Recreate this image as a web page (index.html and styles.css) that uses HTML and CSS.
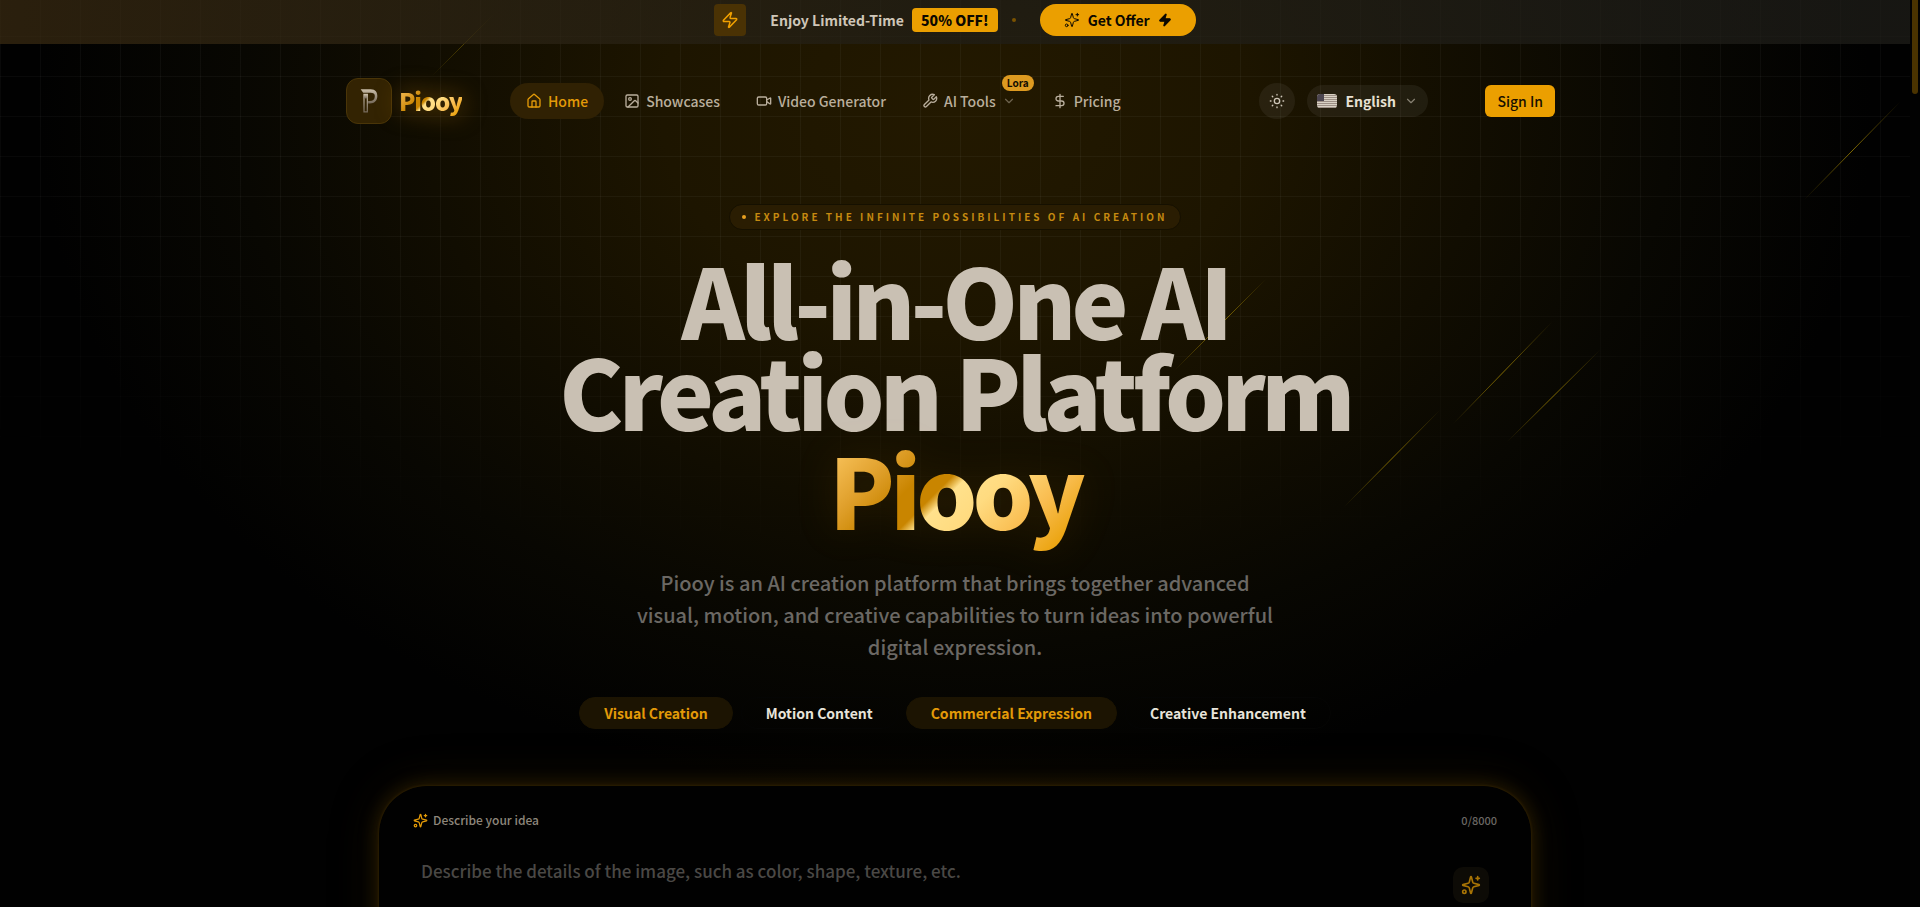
FILE: index.html
```html
<!DOCTYPE html>
<html lang="en">
<head>
<meta charset="utf-8">
<meta name="viewport" content="width=device-width, initial-scale=1">
<title>Piooy - All-in-One AI Creation Platform</title>
<link rel="stylesheet" href="styles.css">
</head>
<body>
<svg class="defs" aria-hidden="true">
  <defs>
    <symbol id="sparkles" viewBox="0 0 24 24"><path d="M9.94 15.5A2 2 0 0 0 8.5 14.06l-6.14-1.58a.5.5 0 0 1 0-.96L8.5 9.94A2 2 0 0 0 9.94 8.5l1.58-6.14a.5.5 0 0 1 .96 0l1.58 6.14a2 2 0 0 0 1.44 1.44l6.14 1.58a.5.5 0 0 1 0 .96l-6.14 1.58a2 2 0 0 0-1.44 1.44l-1.58 6.14a.5.5 0 0 1-.96 0z"/><path d="M20 2v4M22 4h-4"/><circle cx="4" cy="20" r="2"/></symbol>
    <symbol id="bolt" viewBox="0 0 24 24"><path d="M4 14a1 1 0 0 1-.78-1.63l9.9-10.2a.5.5 0 0 1 .86.46l-1.92 6.02A1 1 0 0 0 13 10h7a1 1 0 0 1 .78 1.63l-9.9 10.2a.5.5 0 0 1-.86-.46l1.92-6.02A1 1 0 0 0 11 14z"/></symbol>
    <symbol id="chevron" viewBox="0 0 24 24"><path d="m6 9 6 6 6-6"/></symbol>
    <linearGradient id="streak" x1="0" y1="1" x2="1" y2="0">
      <stop offset="0" stop-color="#a88a00" stop-opacity="0"/>
      <stop offset=".5" stop-color="#a88a00" stop-opacity=".75"/>
      <stop offset="1" stop-color="#a88a00" stop-opacity="0"/>
    </linearGradient>
    <linearGradient id="steel" x1="0" y1="0" x2="0" y2="1">
      <stop offset="0" stop-color="#c9bda8"/>
      <stop offset="1" stop-color="#75695a"/>
    </linearGradient>
  </defs>
</svg>

<div class="page">
  <div class="backdrop" aria-hidden="true">
    <div class="grid"></div>
    <svg class="streaks">
      <path d="M1804 200 1900 102" stroke="url(#streak)"/>
      <path d="M1453 424 1552 322" stroke="url(#streak)"/>
      <path d="M1507 442 1600 350" stroke="url(#streak)"/>
      <path d="M1344 507 1440 410" stroke="url(#streak)"/>
      <path d="M1174 371 1266 279" stroke="url(#streak)"/>
      <path d="M432 76 494 14" stroke="url(#streak)" opacity=".5"/>
    </svg>
  </div>

  <div class="promo">
    <span class="promo-icon"><svg class="icon"><use href="#bolt"/></svg></span>
    <p class="promo-text">Enjoy Limited-Time <strong>50% OFF!</strong></p>
    <span class="promo-dot"></span>
    <button class="offer" type="button">
      <svg class="icon thin"><use href="#sparkles"/></svg>Get Offer<svg class="icon solid"><use href="#bolt"/></svg>
    </button>
  </div>

  <header class="header">
    <a class="brand" href="#">
      <span class="brand-mark">
        <svg viewBox="0 0 24 30"><path d="M2 1h12c6 0 8 4 8 8 0 5-3 9-9 9h-2v-3h2c4 0 6-2 6-6 0-3-2-4-5-4H5z" fill="url(#steel)"/><path d="M6 7h4v21H6z" fill="none" stroke="url(#steel)" stroke-width="1.5"/><path d="M6 7h4v5H6z" fill="url(#steel)"/></svg>
      </span>
      <span class="brand-name gold">Piooy</span>
    </a>
    <nav class="nav" aria-label="Main">
      <a class="nav-item active" href="#"><svg class="icon" viewBox="0 0 24 24"><path d="M15 21v-8a1 1 0 0 0-1-1h-4a1 1 0 0 0-1 1v8"/><path d="M3 10a2 2 0 0 1 .71-1.53l7-6a2 2 0 0 1 2.58 0l7 6A2 2 0 0 1 21 10v9a2 2 0 0 1-2 2H5a2 2 0 0 1-2-2z"/></svg>Home</a>
      <a class="nav-item" href="#"><svg class="icon" viewBox="0 0 24 24"><rect x="3" y="3" width="18" height="18" rx="2"/><circle cx="9" cy="9" r="2"/><path d="m21 15-3.09-3.09a2 2 0 0 0-2.82 0L6 21"/></svg>Showcases</a>
      <a class="nav-item" href="#"><svg class="icon" viewBox="0 0 24 24"><path d="m16 13 5.22 3.48a.5.5 0 0 0 .78-.41V7.87a.5.5 0 0 0-.75-.43L16 10.5"/><rect x="2" y="6" width="14" height="12" rx="2"/></svg>Video Generator</a>
      <button class="nav-item" type="button"><svg class="icon" viewBox="0 0 24 24"><path d="M14.7 6.3a1 1 0 0 0 0 1.4l1.6 1.6a1 1 0 0 0 1.4 0l3.77-3.77a6 6 0 0 1-7.94 7.94l-6.91 6.91a2.12 2.12 0 0 1-3-3l6.91-6.91a6 6 0 0 1 7.94-7.94z"/></svg>AI Tools<svg class="icon faint compact"><use href="#chevron"/></svg><span class="tag">Lora</span></button>
      <a class="nav-item" href="#"><svg class="icon" viewBox="0 0 24 24"><path d="M12 2v20M17 5H9.5a3.5 3.5 0 0 0 0 7h5a3.5 3.5 0 0 1 0 7H6"/></svg>Pricing</a>
    </nav>
    <div class="actions">
      <button class="theme" type="button" aria-label="Toggle theme"><svg class="icon" viewBox="0 0 24 24"><circle cx="12" cy="12" r="4"/><path d="M12 2v1M12 21v1M4.93 4.93l.7.7M18.36 18.36l.7.7M2 12h1M21 12h1M5.64 18.36l-.7.7M19.07 4.93l-.7.7"/></svg></button>
      <label class="language">
        <svg class="flag" viewBox="0 0 20 14"><rect width="20" height="14" fill="#d9d1c4"/><path d="M0 1.5h20M0 3.5h20M0 5.5h20M0 7.5h20M0 9.5h20M0 11.5h20M0 13.5h20" stroke="#9d8f85"/><rect width="7" height="7" fill="#4d4650"/></svg>
        <select aria-label="Language"><option>English</option></select>
        <svg class="icon faint compact"><use href="#chevron"/></svg>
      </label>
      <button class="signin" type="button">Sign In</button>
    </div>
  </header>

  <main class="hero">
    <p class="eyebrow"><span class="eyebrow-dot"></span>Explore the infinite possibilities of AI creation</p>
    <h1 class="title">All-in-One AI<br>Creation Platform<br><span class="title-brand gold">Piooy</span></h1>
    <p class="lead">Piooy is an AI creation platform that brings together advanced visual, motion, and creative capabilities to turn ideas into powerful digital expression.</p>
    <div class="chips">
      <button class="chip on" type="button">Visual Creation</button>
      <button class="chip" type="button">Motion Content</button>
      <button class="chip on" type="button">Commercial Expression</button>
      <button class="chip" type="button">Creative Enhancement</button>
    </div>
    <form class="composer">
      <div class="composer-head">
        <label class="composer-label" for="idea"><svg class="icon"><use href="#sparkles"/></svg>Describe your idea</label>
        <span class="count">0/8000</span>
      </div>
      <div class="composer-body">
        <textarea id="idea" placeholder="Describe the details of the image, such as color, shape, texture, etc."></textarea>
        <button class="enhance" type="button" aria-label="Enhance prompt"><svg class="icon"><use href="#sparkles"/></svg></button>
      </div>
    </form>
  </main>
</div>
<div class="scrollbar" aria-hidden="true"><span class="thumb"></span></div>
</body>
</html>
```

FILE: styles.css
```css
* { box-sizing: border-box; margin: 0; }

body {
  display: flex;
  height: 100vh;
  overflow: hidden;
  background: #010101;
  color: #cfc6b8;
  font-family: "Noto Sans CJK SC", "Noto Sans", sans-serif;
  font-size: 14px;
  line-height: 24px;
}

button, select, textarea { font: inherit; color: inherit; border: 0; background: none; padding: 0; }
a { color: inherit; text-decoration: none; }

.defs { position: absolute; width: 0; height: 0; }

.icon {
  width: 16px;
  height: 16px;
  flex: none;
  fill: none;
  stroke: currentColor;
  stroke-width: 2;
  stroke-linecap: round;
  stroke-linejoin: round;
}
.icon.faint { opacity: .5; }
.icon.compact { width: 14px; height: 14px; }
.icon.solid { width: 14px; height: 14px; fill: currentColor; }
.icon.thin { stroke-width: 1.5; }

.gold {
  background: linear-gradient(135deg, #f8c25a 8%, #e0a02c 24%, #c98500 36%, #c98500 44%, #ffe18c 48%, #ffdb80 58%, #f9bd50 74%, #e89e00 92%);
  -webkit-background-clip: text;
  background-clip: text;
  color: transparent;
}

/* Page frame and backdrop */
.page { position: relative; flex: 1; overflow: hidden; }
.backdrop {
  position: absolute;
  inset: 0;
  z-index: -1;
  background: radial-gradient(ellipse 48% 76% at 50% 12%, #231900 0%, #1d1500 32%, #110d01 58%, #080702 78%, #010101 100%);
}
.grid {
  position: absolute;
  inset: 0;
  background-image:
    linear-gradient(to right, rgba(255, 255, 255, .04) 1px, transparent 1px),
    linear-gradient(to bottom, rgba(255, 255, 255, .04) 1px, transparent 1px);
  background-size: 40px 40px;
  background-position: 0 -4px;
  -webkit-mask-image: radial-gradient(ellipse 90% 64% at 50% 0%, #000 50%, transparent 100%);
  mask-image: radial-gradient(ellipse 90% 64% at 50% 0%, #000 50%, transparent 100%);
}
.streaks { position: absolute; inset: 0; width: 100%; height: 100%; fill: none; }

.scrollbar { width: 10px; padding: 0 2px; background: #020202; }
.thumb { display: block; height: 94px; border-radius: 0 0 4px 4px; background: #4a3300; }

/* Promo banner */
.promo {
  display: flex;
  align-items: center;
  justify-content: center;
  height: 44px;
  padding-bottom: 4px;
  background: linear-gradient(to right, rgba(60, 44, 18, .7), rgba(32, 30, 24, .7) 50%, rgba(32, 31, 26, .7));
}
.promo-icon {
  display: grid;
  place-items: center;
  width: 32px;
  height: 32px;
  margin-right: 24px;
  border-radius: 4px;
  background: #4a3204;
  color: #f0a000;
}
.promo-icon .icon { width: 18px; height: 18px; }
.promo-text { font-weight: 700; }
.promo-text strong {
  display: inline-block;
  margin-left: 5px;
  padding: 0 9px;
  border-radius: 4px;
  background: #eb9f00;
  color: #0c0800;
}
.promo-dot { width: 4px; height: 4px; margin: 0 24px 0 14px; border-radius: 50%; background: #7a5200; }
.offer {
  display: flex;
  align-items: center;
  gap: 8px;
  height: 32px;
  padding: 0 24px;
  border-radius: 16px;
  background: #eb9f00;
  color: #0c0800;
  font-weight: 700;
}

/* Header */
.header {
  display: flex;
  align-items: center;
  max-width: 1218px;
  margin: 34px auto 0;
  padding-right: 9px;
}
.brand { display: flex; align-items: center; gap: 7px; margin-right: 48px; }
.brand-mark {
  display: grid;
  place-items: center;
  width: 46px;
  height: 46px;
  border: 1px solid #4a3508;
  border-radius: 12px;
  background: #332302;
}
.brand-mark svg { width: 20px; height: 26px; }
.brand-name {
  font-size: 24px;
  line-height: 40px;
  font-weight: 900;
  letter-spacing: -0.05em;
  filter: drop-shadow(0 0 12px rgba(245, 158, 11, .5));
}
.nav { display: flex; gap: 4px; }
.nav-item {
  position: relative;
  display: flex;
  align-items: center;
  gap: 6px;
  height: 36px;
  padding: 0 16px;
  border-radius: 18px;
  color: #b9ae9c;
  font-weight: 500;
}
.nav-item.active { background: #302103; color: #e39a08; }
.tag {
  position: absolute;
  top: -8px;
  right: -2px;
  padding: 0 5px;
  border-radius: 8px;
  background: #dd9a20;
  color: #120c00;
  font-size: 10px;
  font-weight: 700;
  line-height: 16px;
}
.actions { display: flex; align-items: center; margin-left: auto; }
.theme {
  display: grid;
  place-items: center;
  width: 36px;
  height: 36px;
  margin-right: 12px;
  border-radius: 50%;
  background: rgba(255, 255, 255, .06);
}
.language {
  display: flex;
  align-items: center;
  gap: 8px;
  height: 32px;
  margin-right: 57px;
  padding: 0 10px;
  border-radius: 16px;
  background: rgba(255, 255, 255, .06);
  color: #e8e0d2;
  font-weight: 700;
}
.flag { width: 20px; height: 14px; border-radius: 3px; }
.language select { appearance: none; }
.signin {
  height: 32px;
  padding: 0 12px;
  border-radius: 6px;
  background: #eb9f00;
  color: #191000;
  font-weight: 500;
}

/* Hero */
.hero {
  display: flex;
  flex-direction: column;
  align-items: center;
  padding: 80px 24px 0;
  text-align: center;
}
.eyebrow {
  display: flex;
  align-items: center;
  gap: 8px;
  padding: 0 12px;
  border: 1px solid #151000;
  border-radius: 13px;
  background: #2a1d02;
  color: #c58a10;
  font-size: 10px;
  font-weight: 700;
  letter-spacing: 0.3em;
  text-transform: uppercase;
}
.eyebrow-dot { width: 4px; height: 4px; border-radius: 50%; background: #e8a020; }
.title {
  margin-top: 23px;
  color: #c9c0b3;
  font-size: 96px;
  line-height: 91px;
  font-weight: 900;
  letter-spacing: -0.05em;
}
.title-brand {
  display: inline-block;
  padding: 0 8px 16px;
  line-height: 108px;
  filter: drop-shadow(0 0 20px rgba(245, 158, 11, .1));
}
.lead {
  max-width: 648px;
  margin-top: 8px;
  color: #6b6864;
  font-size: 20px;
  line-height: 32px;
  font-weight: 500;
}
.chips { display: flex; gap: 8px; margin-top: 34px; }
.chip {
  height: 32px;
  padding: 0 24px;
  border: 1px solid #050504;
  border-radius: 16px;
  color: #e8e4da;
  font-weight: 700;
  line-height: 22px;
}
.chip.on { border-color: #1c1402; background: #1c1402; color: #e39a08; }

/* Prompt composer */
.composer {
  width: 100%;
  max-width: 1152px;
  margin-top: 57px;
  padding: 22px 24px 24px;
  border-radius: 48px;
  background: #010101;
  box-shadow: 0 0 3px #3a2900, 0 0 18px #2e2000, 0 0 48px rgba(60, 42, 0, .4);
}
.composer-head {
  display: flex;
  align-items: center;
  justify-content: space-between;
  padding: 0 10px;
}
.composer-label { display: flex; align-items: center; gap: 5px; color: #8e877c; font-size: 12px; font-weight: 500; }
.composer-label .icon { width: 15px; height: 15px; color: #e39a08; }
.count { color: #6b6864; font-size: 11px; font-weight: 500; }
.composer-body {
  display: flex;
  align-items: flex-start;
  justify-content: space-between;
  padding: 25px 18px 24px;
}
.composer-body textarea {
  flex: 1;
  height: 120px;
  outline: 0;
  resize: none;
  font-size: 17px;
  font-weight: 500;
  line-height: 28px;
}
.composer-body textarea::placeholder { color: #4a4845; }
.enhance {
  display: grid;
  place-items: center;
  width: 36px;
  height: 36px;
  margin-top: 10px;
  border-radius: 10px;
  background: #0d0b06;
  color: #a87405;
}
.enhance .icon { width: 20px; height: 20px; }
```
